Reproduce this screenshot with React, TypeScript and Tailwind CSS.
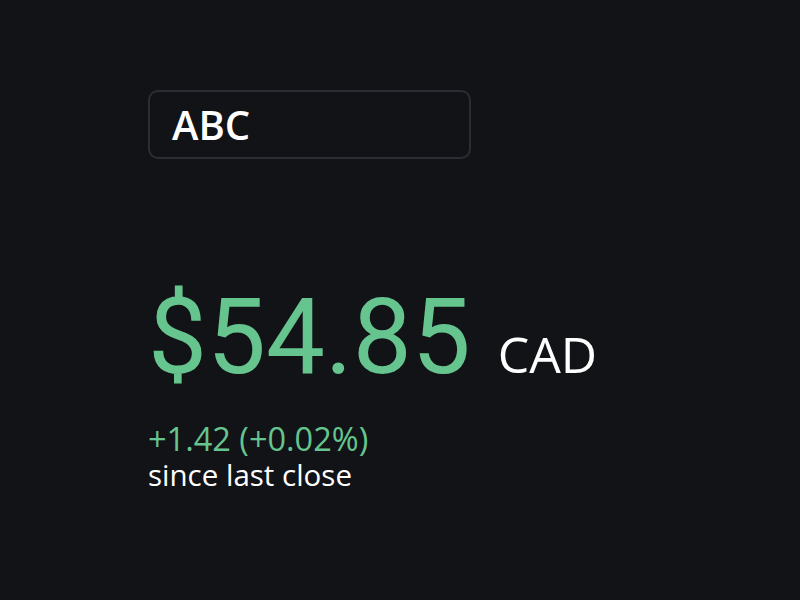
export default function App() {
  return (
    <div className="min-h-[600px] w-[800px] bg-[#111317] pl-[148px] pt-[90px] font-['Open_Sans',sans-serif]">
      <div className="flex h-[69px] w-[323px] items-center rounded-[10px] border-2 border-[#2a2e34] px-[22px]">
        <span className="text-[40px] font-semibold text-white">ABC</span>
      </div>
      <div className="mt-[126px] flex items-baseline gap-[27px]">
        <span className="font-['Roboto',sans-serif] text-[105px] leading-none text-[#66c48f]">$54.85</span>
        <span className="text-[50px] leading-none text-white">CAD</span>
      </div>
      <div className="mt-[31px] flex flex-col">
        <span className="text-[32.5px] leading-[36px] text-[#66c48f]">+1.42 (+0.02%)</span>
        <span className="text-[29.5px] leading-[36px] text-white">since last close</span>
      </div>
    </div>
  );
}
